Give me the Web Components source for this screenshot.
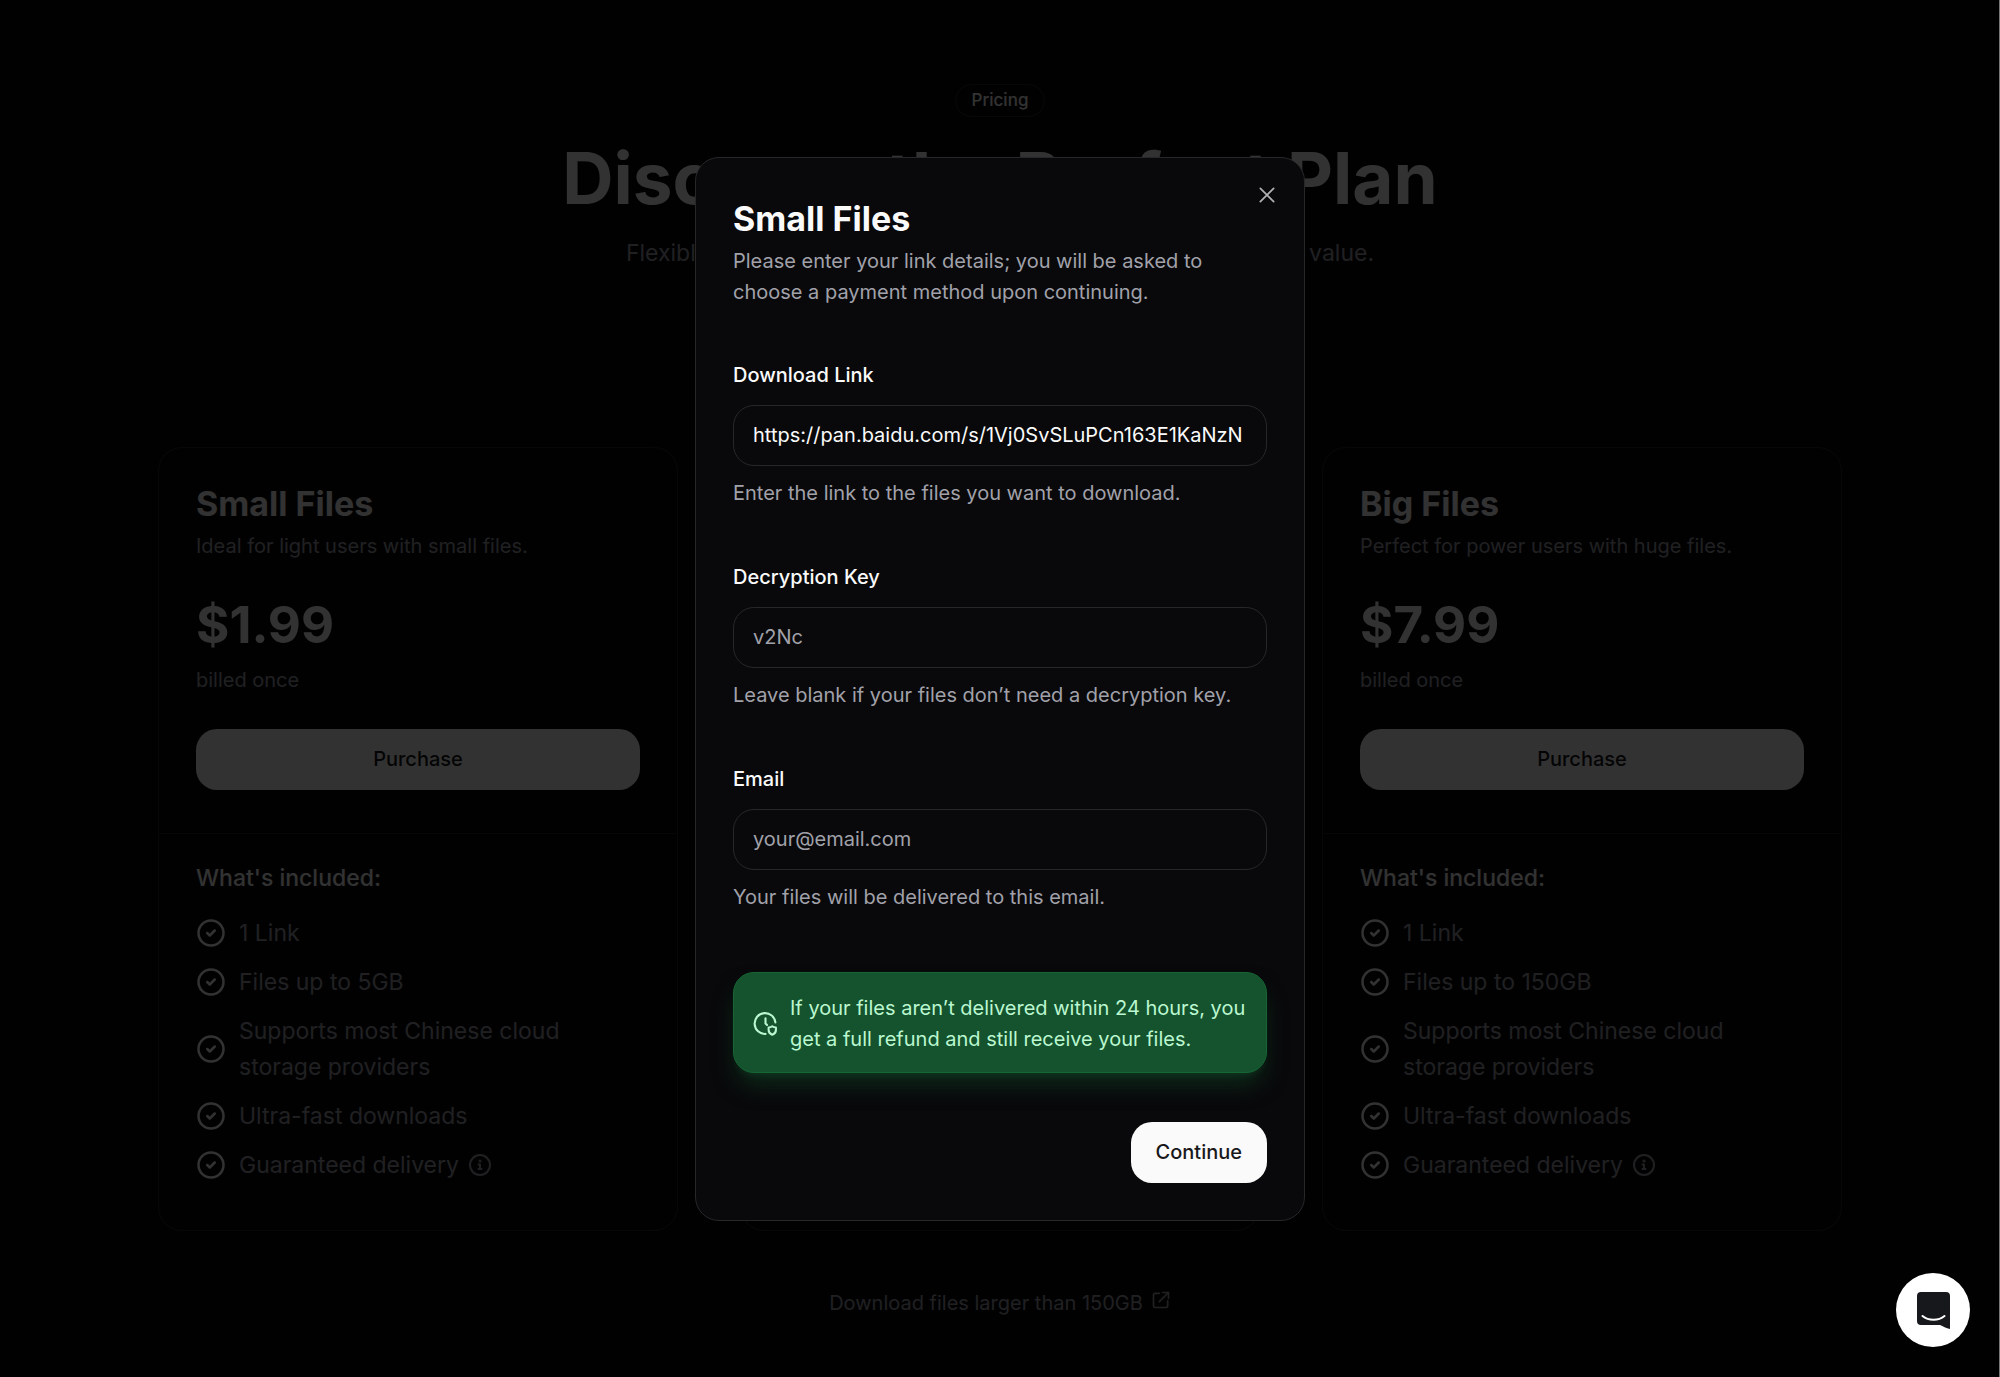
<!DOCTYPE html>
<html lang="en">
<head>
<meta charset="utf-8">
<meta name="viewport" content="width=device-width, initial-scale=1">
<title>Pricing</title>
<style>
  :root {
    --bg: #09090b;
    --fg: #fafafa;
    --muted: #a1a1aa;
    --line: #27272a;
    --ink: #18181b;
  }
  html { background: #020202; }
  body {
    margin: 0;
    background: var(--bg);
    color: var(--fg);
    font: 400 20px/31px Inter, "Liberation Sans", sans-serif;
  }
</style>
</head>
<body>
<pricing-page>
  <span slot="badge">Pricing</span>
  <span slot="title">Discover the Perfect Plan</span>
  <span slot="lead">Flexible pricing options designed for your needs, with the best value.</span>
  <plan-card name="Small Files" note="Ideal for light users with small files." price="$1.99" limit="Files up to 5GB"></plan-card>
  <plan-card></plan-card>
  <plan-card name="Big Files" note="Perfect for power users with huge files." price="$7.99" limit="Files up to 150GB"></plan-card>
  <span slot="more">Download files larger than 150GB</span>
</pricing-page>

<purchase-dialog>
  <span slot="title">Small Files</span>
  <span slot="description">Please enter your link details; you will be asked to choose a payment method upon continuing.</span>
  <form-field label="Download Link" type="url" value="https://pan.baidu.com/s/1Vj0SvSLuPCn163E1KaNzN" hint="Enter the link to the files you want to download."></form-field>
  <form-field label="Decryption Key" type="text" placeholder="v2Nc" hint="Leave blank if your files don’t need a decryption key."></form-field>
  <form-field label="Email" type="email" placeholder="your@email.com" hint="Your files will be delivered to this email."></form-field>
  <guarantee-note slot="note">If your files aren’t delivered within 24 hours, you get a full refund and still receive your files.</guarantee-note>
</purchase-dialog>

<chat-launcher></chat-launcher>

<script>
  const icons = {
    check: '<circle cx="12" cy="12" r="10"/><path d="m9 12 2 2 4-4"/>',
    info: '<circle cx="12" cy="12" r="10"/><path d="M10.5 11.5H12V16M10.5 16h3"/><circle cx="12" cy="8" r=".6" fill="currentColor"/>',
    external: '<path d="M14 3h7v7M21 3 10 14M20 13v6a2 2 0 0 1-2 2H5a2 2 0 0 1-2-2V6a2 2 0 0 1 2-2h5"/>',
    close: '<path d="M4 4l16 16M20 4 4 20"/>',
    guarantee: '<path d="M21.5 11A10 10 0 1 0 12 22"/><path d="M12 7v5l1.5 1.5"/><path d="M18.5 14.6c1 .8 2.200 1.200 3.500 1.200v2.400c0 2.200-1.200 3.700-3.500 4.600-2.300-.9-3.500-2.400-3.500-4.600v-2.400c1.300 0 2.500-.4 3.500-1.200z"/>'
  };

  class BaseElement extends HTMLElement {
    connectedCallback() {
      if (this.shadowRoot) return;
      this.attachShadow({ mode: 'open' }).innerHTML =
        `<style>*, *::before { box-sizing: border-box; } h1, h2, p, ul { margin: 0; padding: 0; } ${this.styles()}</style>${this.view()}`;
    }
    attr(name) { return this.getAttribute(name) || ''; }
  }

  customElements.define('ui-icon', class extends BaseElement {
    styles() {
      return `:host { display: inline-flex; flex: none; width: var(--size, 24px); height: var(--size, 24px); }
        svg { width: 100%; height: 100%; overflow: visible; }`;
    }
    view() {
      return `<svg viewBox="0 0 24 24" fill="none" stroke="currentColor" stroke-width="2" stroke-linecap="round" stroke-linejoin="round" aria-hidden="true">${icons[this.attr('name')]}</svg>`;
    }
  });

  customElements.define('ui-button', class extends BaseElement {
    styles() {
      return `:host { display: block; }
        button { width: 100%; height: 61px; padding: 0 25px; border: 0; border-radius: 21px; background: var(--fg); color: var(--ink); font: inherit; font-weight: 500; cursor: pointer; }`;
    }
    view() { return '<button type="button"><slot></slot></button>'; }
  });

  customElements.define('plan-feature', class extends BaseElement {
    styles() {
      return `:host { display: flex; align-items: center; gap: 13px; font-size: 23px; line-height: 36px; color: var(--muted); }
        .tick { --size: 30px; color: var(--fg); }`;
    }
    view() { return '<ui-icon class="tick" name="check"></ui-icon><slot></slot>'; }
  });

  customElements.define('plan-card', class extends BaseElement {
    styles() {
      return `:host { display: flex; flex-direction: column; border: 1px solid var(--line); border-radius: 24px; background: var(--bg); }
        .summary { padding: 37px 37px 43px; }
        h2 { font-size: 34px; line-height: 38px; font-weight: 700; }
        .note { margin-top: 8px; color: var(--muted); }
        .price { margin-top: 30px; font-size: 51px; line-height: 66px; font-weight: 700; }
        .term { margin-top: 7px; color: var(--muted); }
        ui-button { margin-top: 33px; }
        .included { padding: 26px 37px 47px; border-top: 1px solid var(--line); }
        .heading { font-size: 23px; line-height: 36px; font-weight: 500; }
        ul { display: flex; flex-direction: column; gap: 13px; margin-top: 19px; list-style: none; }
        .info { --size: 24px; margin-left: 9px; }
        .tail { display: flex; align-items: center; }`;
    }
    view() {
      if (!this.hasAttribute('name')) return '';
      return `<div class="summary">
          <h2>${this.attr('name')}</h2>
          <p class="note">${this.attr('note')}</p>
          <p class="price">${this.attr('price')}</p>
          <p class="term">billed once</p>
          <ui-button>Purchase</ui-button>
        </div>
        <div class="included">
          <p class="heading">What's included:</p>
          <ul>
            <li><plan-feature>1 Link</plan-feature></li>
            <li><plan-feature>${this.attr('limit')}</plan-feature></li>
            <li><plan-feature>Supports most Chinese cloud storage providers</plan-feature></li>
            <li><plan-feature>Ultra-fast downloads</plan-feature></li>
            <li><plan-feature><span class="tail">Guaranteed delivery<ui-icon class="info" name="info"></ui-icon></span></plan-feature></li>
          </ul>
        </div>`;
    }
  });

  customElements.define('pricing-page', class extends BaseElement {
    styles() {
      return `:host { display: flex; flex-direction: column; align-items: center; min-height: 100vh; padding: 84px 24px 24px; box-sizing: border-box; }
        .badge { padding: 0 16px; border: 1px solid var(--line); border-radius: 17px; font-size: 17px; line-height: 31px; font-weight: 500; }
        h1 { margin-top: 24px; font-size: 71px; line-height: 74px; font-weight: 700; text-align: center; }
        .lead { margin-top: 20px; font-size: 23px; line-height: 36px; color: var(--muted); text-align: center; }
        .plans { display: grid; grid-template-columns: repeat(3, minmax(0, 1fr)); gap: 62px; width: 100%; max-width: 1684px; margin-top: 176px; }
        a { display: flex; gap: 8px; margin-top: 57px; color: var(--muted); text-decoration: none; }
        a ui-icon { --size: 20px; margin-top: 2px; }`;
    }
    view() {
      return `<div class="badge"><slot name="badge"></slot></div>
        <h1><slot name="title"></slot></h1>
        <p class="lead"><slot name="lead"></slot></p>
        <div class="plans"><slot></slot></div>
        <a href="#"><slot name="more"></slot><ui-icon name="external"></ui-icon></a>`;
    }
  });

  customElements.define('form-field', class extends BaseElement {
    styles() {
      return `:host { display: flex; flex-direction: column; }
        label { font-weight: 500; }
        input { width: 100%; height: 61px; margin: 14px 0 12px; padding: 0 19px; border: 1px solid var(--line); border-radius: 21px; background: transparent; color: var(--fg); font: inherit; outline: 0; }
        input::placeholder { color: var(--muted); opacity: 1; }
        p { color: var(--muted); }`;
    }
    view() {
      return `<label for="control">${this.attr('label')}</label>
        <input id="control" type="${this.attr('type')}" value="${this.attr('value')}" placeholder="${this.attr('placeholder')}" aria-describedby="hint">
        <p id="hint">${this.attr('hint')}</p>`;
    }
  });

  customElements.define('guarantee-note', class extends BaseElement {
    styles() {
      return `:host { display: flex; align-items: center; gap: 12px; padding: 20px 12px 17px 19px; border: 1px solid #166534; border-radius: 21px; background: #14532d; color: #bbf7d0; box-shadow: 0 15px 23px -5px #14532d80, 0 6px 9px -6px #14532d80; }
        ui-icon { --size: 25px; }`;
    }
    view() { return '<ui-icon name="guarantee"></ui-icon><slot></slot>'; }
  });

  customElements.define('purchase-dialog', class extends BaseElement {
    styles() {
      return `:host { position: fixed; inset: 0; display: flex; align-items: center; justify-content: center; background: rgb(0 0 0 / 80%); box-shadow: inset -1px 0 #777; }
        section { position: relative; width: 100%; max-width: 610px; padding: 37px; border: 1px solid var(--line); border-radius: 24px; background: var(--bg); }
        h2 { font-size: 34px; line-height: 47px; font-weight: 700; }
        .description { margin-top: 4px; color: var(--muted); }
        form { display: flex; flex-direction: column; gap: 53px; margin-top: 52px; }
        .note { margin-top: 59px; }
        footer { display: flex; justify-content: flex-end; margin-top: 49px; }
        .close { position: absolute; top: 25px; right: 25px; display: flex; padding: 2px; border: 0; background: none; color: var(--fg); opacity: .7; cursor: pointer; }
        .close ui-icon { --size: 20px; }`;
    }
    view() {
      return `<section role="dialog" aria-modal="true" aria-labelledby="title">
          <h2 id="title"><slot name="title"></slot></h2>
          <p class="description"><slot name="description"></slot></p>
          <form><slot></slot></form>
          <div class="note"><slot name="note"></slot></div>
          <footer><ui-button>Continue</ui-button></footer>
          <button class="close" type="button" aria-label="Close"><ui-icon name="close"></ui-icon></button>
        </section>`;
    }
  });

  customElements.define('chat-launcher', class extends BaseElement {
    styles() {
      return `:host { position: fixed; right: 30px; bottom: 30px; }
        button { display: flex; align-items: center; justify-content: center; width: 74px; height: 74px; padding: 0; border: 0; border-radius: 50%; background: #fff; cursor: pointer; }
        svg { width: 33px; height: 37px; }`;
    }
    view() {
      return `<button type="button" aria-label="Open chat"><svg viewBox="0 0 33 37" aria-hidden="true">
          <path d="M4 0h25a4 4 0 0 1 4 4v33c-4-1-7-2.500-10-4H4a4 4 0 0 1-4-4V4a4 4 0 0 1 4-4z" fill="#17181c"/>
          <path d="M5.500 24c6 5 16 5 22 0" fill="none" stroke="#fff" stroke-width="2" stroke-linecap="round"/></svg></button>`;
    }
  });
</script>
</body>
</html>
